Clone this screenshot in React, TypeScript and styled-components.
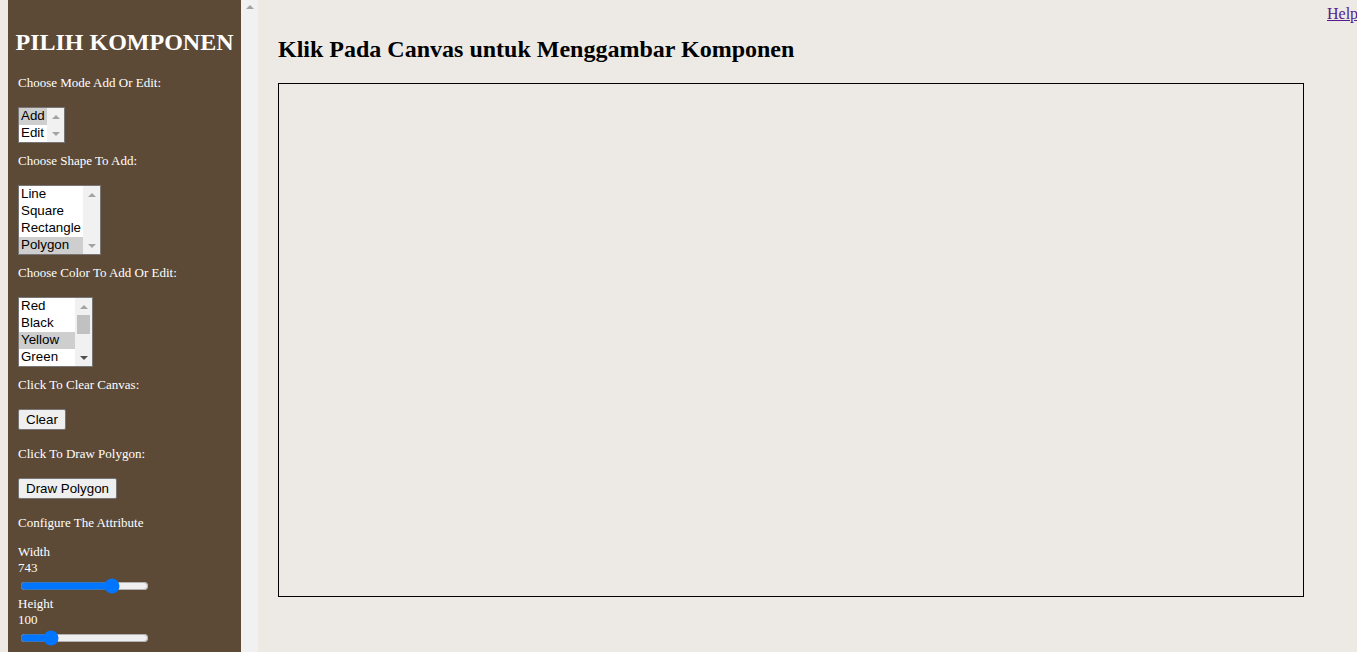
import React from "react";
import styled, { createGlobalStyle } from "styled-components";

const GlobalStyle = createGlobalStyle`
    html, body {
        margin: 0;
        padding: 0;
        overflow: hidden;
        background: #edeae5;
        font-family: "Liberation Serif", "Times New Roman", serif;
    }
`;

const Page = styled.div`
    display: flex;
    height: 652px;
    padding-left: 8px;
    overflow: hidden;
`;

const Sidebar = styled.div`
    width: 233px;
    flex-shrink: 0;
    background: #5c4a37;
    color: #fff;
    padding: 0 10px;
    box-sizing: border-box;
    overflow: hidden;
`;

const ScrollStrip = styled.div`
    width: 17px;
    flex-shrink: 0;
    background: #f1f1f1;
    display: flex;
    justify-content: center;
    padding-top: 5px;
    box-sizing: border-box;
`;

const Arrow = styled.div<{ $down?: boolean; $dark?: boolean }>`
    width: 0;
    height: 0;
    border-left: 4px solid transparent;
    border-right: 4px solid transparent;
    ${(p) =>
        p.$down
            ? `border-top: 4px solid ${p.$dark ? "#505050" : "#a3a3a3"};`
            : `border-bottom: 4px solid ${p.$dark ? "#505050" : "#a3a3a3"};`}
`;

const SideTitle = styled.h2`
    margin: 28px -10px 0;
    font-size: 24px;
    line-height: 28px;
    font-weight: bold;
    text-align: center;
    white-space: nowrap;
`;

const Label = styled.div<{ $gap: number; $after?: number }>`
    font-size: 13px;
    line-height: 15px;
    margin-top: ${(p) => p.$gap}px;
    margin-bottom: ${(p) => p.$after ?? 17}px;
`;

const ListBox = styled.div`
    display: inline-flex;
    border: 1px solid #767676;
    background: #fff;
    vertical-align: top;
`;

const Options = styled.div<{ $w: number; $rows: number }>`
    width: ${(p) => p.$w}px;
    height: ${(p) => p.$rows * 17}px;
    overflow: hidden;
`;

const Option = styled.div<{ $selected?: boolean }>`
    height: 17px;
    line-height: 15px;
    padding: 0 0 2px 2px;
    box-sizing: border-box;
    font-family: "Liberation Sans", Arial, sans-serif;
    font-size: 13.33px;
    color: #000;
    white-space: nowrap;
    background: ${(p) => (p.$selected ? "#cecece" : "transparent")};
`;

const ListScroll = styled.div`
    position: relative;
    width: 17px;
    background: #f1f1f1;
    display: flex;
    flex-direction: column;
    justify-content: space-between;
`;

const ArrowBtn = styled.div`
    height: 17px;
    display: flex;
    align-items: center;
    justify-content: center;
`;

const Thumb = styled.div<{ $top: number; $h: number }>`
    position: absolute;
    left: 2px;
    width: 13px;
    top: ${(p) => p.$top}px;
    height: ${(p) => p.$h}px;
    background: #c1c1c1;
`;

const Button = styled.button`
    display: block;
    height: 21px;
    padding: 0 7px;
    margin: 0;
    border: 1px solid #767676;
    border-radius: 2px;
    background: #efefef;
    font-family: "Liberation Sans", Arial, sans-serif;
    font-size: 13.33px;
    color: #000;
`;

const Small = styled.div`
    font-size: 13px;
    line-height: 16px;
`;

const Range = styled.input`
    display: block;
    width: 129px;
    height: 16px;
    margin: 2px 2px;
    accent-color: #0075ff;
`;

const Main = styled.div`
    display: flex;
    align-items: flex-start;
    padding-left: 20px;
    flex-shrink: 0;
`;

const Content = styled.div`
    display: flex;
    flex-direction: column;
`;

const Heading = styled.h1`
    margin: 36px 0 20px;
    font-size: 24px;
    line-height: 27px;
    font-weight: bold;
    color: #000;
`;

const Canvas = styled.canvas`
    display: block;
    width: 1024px;
    height: 512px;
    border: 1px solid #000;
`;

const Help = styled.a`
    margin-left: 23px;
    margin-top: 5px;
    font-size: 16px;
    line-height: 18px;
    color: #551a8b;
    text-decoration: underline;
    white-space: nowrap;
`;

type ListProps = {
    options: string[];
    rows: number;
    width: number;
    selected: number;
    thumb?: { top: number; h: number };
};

function List({ options, rows, width, selected, thumb }: ListProps) {
    return (
        <ListBox>
            <Options $w={width} $rows={rows}>
                {options.map((o, i) => (
                    <Option key={o} $selected={i === selected}>
                        {o}
                    </Option>
                ))}
            </Options>
            <ListScroll>
                <ArrowBtn>
                    <Arrow />
                </ArrowBtn>
                {thumb && <Thumb $top={thumb.top} $h={thumb.h} />}
                <ArrowBtn>
                    <Arrow $down $dark={!!thumb} />
                </ArrowBtn>
            </ListScroll>
        </ListBox>
    );
}

export default function App() {
    return (
        <>
            <GlobalStyle />
            <Page>
                <Sidebar>
                    <SideTitle>PILIH KOMPONEN</SideTitle>

                    <Label $gap={19}>Choose Mode Add Or Edit:</Label>
                    <List options={["Add", "Edit"]} rows={2} width={28} selected={0} />

                    <Label $gap={10}>Choose Shape To Add:</Label>
                    <List
                        options={["Line", "Square", "Rectangle", "Polygon"]}
                        rows={4}
                        width={64}
                        selected={3}
                    />

                    <Label $gap={10}>Choose Color To Add Or Edit:</Label>
                    <List
                        options={["Red", "Black", "Yellow", "Green", "Blue", "White", "Purple"]}
                        rows={4}
                        width={56}
                        selected={2}
                        thumb={{ top: 17, h: 19 }}
                    />

                    <Label $gap={10}>Click To Clear Canvas:</Label>
                    <Button>Clear</Button>

                    <Label $gap={16}>Click To Draw Polygon:</Label>
                    <Button>Draw Polygon</Button>

                    <Label $gap={16} $after={14}>
                        Configure The Attribute
                    </Label>
                    <Small>Width</Small>
                    <Small>743</Small>
                    <Range type="range" min={0} max={1000} defaultValue={743} />
                    <Small>Height</Small>
                    <Small>100</Small>
                    <Range type="range" min={0} max={500} defaultValue={100} />
                </Sidebar>
                <ScrollStrip>
                    <Arrow />
                </ScrollStrip>
                <Main>
                    <Content>
                        <Heading>Klik Pada Canvas untuk Menggambar Komponen</Heading>
                        <Canvas width={1024} height={512} />
                    </Content>
                    <Help href="#">Help</Help>
                </Main>
            </Page>
        </>
    );
}
